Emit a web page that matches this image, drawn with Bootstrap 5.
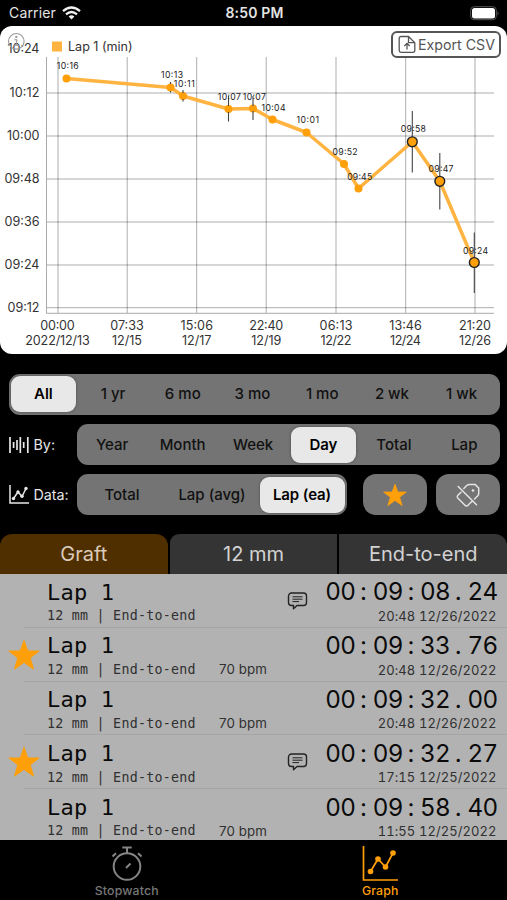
<!DOCTYPE html>
<html lang="en">
<head>
<meta charset="utf-8">
<meta name="viewport" content="width=device-width, initial-scale=1">
<title>Stopwatch Graph</title>
<link rel="stylesheet" href="https://cdn.jsdelivr.net/npm/bootstrap@5.3.0/dist/css/bootstrap.min.css">
<style>
body{background:#000;font-family:Inter,"Liberation Sans",sans-serif;height:900px;overflow:hidden;line-height:1.2}
svg{display:block;flex:none}
.status{height:26px;color:#e4e4e4;font-size:14px;letter-spacing:.15px;padding:1px 7px 0 9px}
.status>*{flex:1 1 0}
.chart-panel{height:328px;background:#fff;border-radius:12px}
.chart-panel text{fill:#333;font-size:12.6px}
.chart-panel .pt text{font-size:8.7px;fill:#222}
.btn-export{top:5px;right:6px;width:110px;height:27px;border:2px solid #555;border-radius:6px;color:#555;font-size:14.200px;background:#fff;padding:0 0 0 4.500px;gap:2.500px;white-space:nowrap}
.controls{padding:19.5px 7.5px 0 8.5px;height:179.5px;font-size:15px;color:#e6e6e6}
.seg{height:41px;background:#747474;border-radius:11px;padding:2.500px 0;color:#111;font-weight:500;grid-auto-flow:column;grid-auto-columns:minmax(0,1fr)}
.seg.range{padding-right:3px}
.seg>span{display:flex;align-items:center;justify-content:center;border-radius:9px;white-space:nowrap}
.seg>.on{background:#e8e8e8;font-weight:600;color:#000;letter-spacing:-.1px;margin:0 2.500px;box-shadow:0 0 3px rgba(0,0,0,.35)}
.seg-label{width:68.5px;gap:5px;font-size:14.3px}
.sq{width:63.5px;height:41px;background:#747474;border-radius:13px}
.tabs3{height:40.5px;gap:2px}
.tabs3>div{flex:1 1 0;background:#343434;color:#d2d2d2;font-size:20px;display:flex;align-items:center;justify-content:center}
.tabs3>div:first-child{background:#4f2f00;border-radius:12px 12px 0 0;color:#dacbbb}
.tabs3>div:nth-child(2){border-radius:9px 0 0 0}
.tabs3>div:last-child{border-radius:0 12px 0 0}
.laps{height:266px;background:#b2b2b2;overflow:hidden;color:#0a0a0a}
.lap{height:53.8px;display:grid;grid-template-columns:47px 172px 68px 25px 1fr;padding-right:10.500px;background:linear-gradient(#a6a6a6,#a6a6a6) 24px 100%/100% 1px no-repeat}
.mono{font-family:"DejaVu Sans Mono","Liberation Mono",monospace}
.lap-name{font-size:22px;line-height:28px;padding-top:4.500px;letter-spacing:.2px}
.lap-sub{font-size:13.3px;line-height:18px;height:18px;letter-spacing:.26px;color:#303030;white-space:nowrap;margin-top:.800px}
.lap-bpm{font-size:13.300px;line-height:18px;padding-top:32.500px;color:#303030;letter-spacing:.1px}
.lap-time{font-size:24.2px;line-height:28px;padding-top:4.400px;justify-content:flex-end}
.lap-time b{font-weight:400;width:29px;text-align:center;letter-spacing:-.7px;font-feature-settings:"tnum"}
.lap-time i{font-style:normal;width:18.4px;text-align:center}
.lap-date{font-size:13px;line-height:18px;text-align:right;letter-spacing:.08px;font-feature-settings:"tnum";color:#303030;margin-top:.400px;white-space:nowrap}
.note-cell{padding-top:18px}
.star-cell{padding:11px 0 0 8px}
.tabbar{height:60px;color:#777;font-size:12.300px;font-weight:500;letter-spacing:.15px}
.tabbar>div{flex:1 1 0;gap:2px}
.orange{color:#ff9f0a}
</style>
<script src="https://cdn.jsdelivr.net/npm/bootstrap@5.3.0/dist/js/bootstrap.bundle.min.js"></script>
</head>
<body>
<svg width="0" height="0" class="position-absolute">
<defs>
<symbol id="star" viewBox="0 0 32 32"><path d="M16 1.5 19.8 12h11.4l-9 6.9 3.3 11.2L16 23.4l-9.500 6.700L9.800 18.900.8 12h11.400Z" fill="#ff9f0a" stroke="#ff9f0a" stroke-linejoin="round"/></symbol>
<symbol id="note" viewBox="0 0 20 18"><path d="M4 1h12a3 3 0 0 1 3 3v6.500a3 3 0 0 1-3 3H9.500L6 16.800V13.500H4a3 3 0 0 1-3-3V4a3 3 0 0 1 3-3Z" fill="none" stroke="#222" stroke-width="1.400" stroke-linejoin="round"/><path d="M5 4.800h10M5 7.200h10M5 9.600h6.500" stroke="#222"/></symbol>
</defs>
</svg>

<header class="status d-flex align-items-center">
  <div class="d-flex align-items-center gap-2"><span>Carrier</span>
    <svg width="19" height="14" viewBox="0 0 19 14" fill="none" stroke="#f0f0f0" stroke-width="2.300" style="margin-left:-2px"><path d="M1 5.200Q9.500-2.200 18 5.200M4 8.300q5.500-4.600 11 0"/><path d="M6.600 10.400q2.900-2.200 5.800 0L9.500 13.600Z" fill="#f0f0f0" stroke="none"/></svg></div>
  <div class="text-center fw-semibold text-nowrap">8:50 PM</div>
  <div class="d-flex justify-content-end"><svg width="30" height="15" viewBox="0 0 30 15"><rect x=".7" y=".7" width="25.600" height="13" rx="3.500" fill="none" stroke="#555"/><rect x="2" y="2" width="23" height="10.400" rx="2.500" fill="#fff"/><path d="M27.500 5v4.500q2.200-2.200 0-4.500" fill="#555"/></svg></div>
</header>

<section class="chart-panel position-relative">
<svg width="507" height="328" viewBox="0 26 507 328">
  <path d="M46 93H494M46 136H494M46 179H494M46 222H494M46 265H494M46 307.700H494M58 57V313M127.200 57V313M196.700 57V313M266.200 57V313M336 57V313M405.700 57V313M475 57V313" stroke="#000" stroke-opacity=".32" fill="none"/>
  <path d="M46.500 57V313.300H494" stroke="#aaa" fill="none"/>
  <g text-anchor="end">
    <text x="39.500" y="53" textLength="32">10:24</text><text x="39.500" y="96.500" textLength="30">10:12</text><text x="39.500" y="139.500" textLength="32.500">10:00</text><text x="39.500" y="182.500" textLength="35">09:48</text><text x="39.500" y="225.500" textLength="35">09:36</text><text x="39.500" y="268.500" textLength="35">09:24</text><text x="39.500" y="311.500" textLength="32">09:12</text>
  </g>
  <g text-anchor="middle">
    <text x="57.500" y="330" textLength="34.500">00:00</text><text x="57.500" y="345" textLength="64.500">2022/12/13</text>
    <text x="127" y="330" textLength="33.500">07:33</text><text x="127" y="345" textLength="30">12/15</text>
    <text x="196.700" y="330" textLength="32.500">15:06</text><text x="196.700" y="345" textLength="29.500">12/17</text>
    <text x="266.300" y="330" textLength="34">22:40</text><text x="266.300" y="345" textLength="30">12/19</text>
    <text x="336" y="330" textLength="33">06:13</text><text x="336" y="345" textLength="31">12/22</text>
    <text x="405.500" y="330" textLength="32.500">13:46</text><text x="405.500" y="345" textLength="31">12/24</text>
    <text x="475" y="330" textLength="32">21:20</text><text x="475" y="345" textLength="32">12/26</text>
  </g>
  <rect x="52" y="41.500" width="10" height="10" fill="#ffb340"/>
  <text x="68" y="51" textLength="64.500">Lap 1 (min)</text>
  <g fill="none" stroke="#999" stroke-width="1.100"><circle cx="16.300" cy="41.300" r="7.800"/><path d="M14.300 39.800H16.700V45M14 45.200h5"/><circle cx="16.300" cy="37" r=".6" fill="#999"/></g>
  <polyline points="66.500,78.500 170.500,87.500 183,96 228.500,109 253,108.500 272.500,119.500 306.500,132.500 344,164 358.500,188.500 412.300,141.800 439.800,181.300 474.300,262.500" fill="none" stroke="#ffb340" stroke-width="3.500" stroke-linejoin="round"/>
  <g fill="#ff9f0a"><circle cx="66.500" cy="78.500" r="4"/><circle cx="170.500" cy="87.500" r="4"/><circle cx="183" cy="96" r="4"/><circle cx="228.500" cy="109" r="4"/><circle cx="253" cy="108.500" r="4"/><circle cx="272.500" cy="119.500" r="4"/><circle cx="306.500" cy="132.500" r="4"/><circle cx="344" cy="164" r="4"/><circle cx="358.500" cy="188.500" r="4"/></g>
  <path d="M170.500 82v2M170.500 91v1.500M183 90v3M183 99v2.500M228.500 96v10M228.500 112v9.500M253 96v10M253 111v9M412.300 111v26M412.300 146v26.500M439.800 153v24M439.800 186v23.500M474.300 232.500v25M474.300 267v26" stroke="#444" stroke-width="1.100"/>
  <g fill="#ff9f0a" stroke="#222" stroke-width="1.400"><circle cx="412.300" cy="141.800" r="4.900"/><circle cx="439.800" cy="181.300" r="4.900"/><circle cx="474.300" cy="262.500" r="4.900"/></g>
  <g class="pt" text-anchor="middle">
    <text x="67.700" y="69.300" textLength="22">10:16</text><text x="172" y="77.700" textLength="22">10:13</text><text x="184.300" y="86.700" textLength="21">10:11</text><text x="229.300" y="99.700" textLength="23">10:07</text><text x="254.300" y="99.700" textLength="23">10:07</text><text x="273.500" y="110.500" textLength="24">10:04</text><text x="307.700" y="123" textLength="22.500">10:01</text><text x="345" y="154.700" textLength="25">09:52</text><text x="359.700" y="179.700" textLength="25">09:45</text><text x="413.300" y="132.300" textLength="25">09:58</text><text x="441" y="172" textLength="25">09:47</text><text x="475.500" y="253.500" textLength="25">09:24</text>
  </g>
</svg>
<div class="btn-export position-absolute d-flex align-items-center">
  <svg width="18" height="19" viewBox="0 0 18 19" fill="none" stroke="#555" stroke-width="1.300"><path d="M10.500 1.500H3A1.800 1.800 0 0 0 1.200 3.300V15.500A1.800 1.800 0 0 0 3 17.300H15A1.800 1.800 0 0 0 16.800 15.500V7.700ZM10.500 1.500V7.700H16.800M9 14.500V8.500M6.300 11 9 8.300l2.700 2.700"/></svg>
  <span>Export CSV</span>
</div>
</section>

<section class="controls">
  <div class="seg range d-grid"><span class="on">All</span><span>1 yr</span><span>6 mo</span><span>3 mo</span><span>1 mo</span><span>2 wk</span><span>1 wk</span></div>
  <div class="d-flex" style="margin-top:9.500px">
    <div class="seg-label d-flex align-items-center">
      <svg width="20" height="16" viewBox="0 0 20 16" stroke="#e8e8e8" stroke-width="1.700"><path d="M1 0v16M4.600 5v6M8 3v10M11.300 0v16M14.700 5v6M18.800 0v16"/></svg><span>By:</span></div>
    <div class="seg d-grid flex-fill"><span>Year</span><span>Month</span><span>Week</span><span class="on">Day</span><span>Total</span><span>Lap</span></div>
  </div>
  <div class="d-flex" style="margin-top:9px">
    <div class="seg-label d-flex align-items-center">
      <svg width="20" height="19" viewBox="0 0 20 19" fill="none" stroke="#e8e8e8" stroke-width="1.500"><path d="M1 0v18h19M4.500 13.500 9 7l4 4.500L17 3.500"/><g fill="#e8e8e8" stroke="none"><circle cx="4.500" cy="13.500" r="1.700"/><circle cx="9" cy="7" r="1.700"/><circle cx="13" cy="11.300" r="1.700"/><circle cx="17" cy="3.500" r="1.700"/></g></svg><span>Data:</span></div>
    <div class="seg d-grid flex-fill"><span>Total</span><span>Lap (avg)</span><span class="on">Lap (ea)</span></div>
    <div class="sq d-flex align-items-center justify-content-center ms-3"><svg width="24" height="24"><use href="#star"/></svg></div>
    <div class="sq d-flex align-items-center justify-content-center" style="margin-left:9.500px">
      <svg width="26" height="26" viewBox="0 0 26 26" fill="none" stroke="#e4e4e4" stroke-width="1.500" stroke-linecap="round" stroke-linejoin="round"><path d="M8.800 6.500 12 3.300Q13 2.400 14.300 2.400H20L23.700 6V11.500Q23.700 12.800 22.800 13.700L19.500 17M17 19.300l-4 4Q11.500 24.500 10 23.300L2.700 16Q1.700 14.800 2.700 13.600L6 10.200M3.200 4.500 21.500 22.700"/><circle cx="18" cy="8.500" r="1.300" fill="#e4e4e4" stroke="none"/></svg></div>
  </div>
</section>

<div class="tabs3 d-flex"><div>Graft</div><div>12 mm</div><div>End-to-end</div></div>

<main class="laps">
  <div class="lap"><div></div><div class="mono"><div class="lap-name">Lap 1</div><div class="lap-sub">12 mm | End-to-end</div></div><div class="lap-bpm"></div><div class="note-cell"><svg width="21" height="18"><use href="#note"/></svg></div><div><div class="lap-time d-flex"><b>00</b><i>:</i><b>09</b><i>:</i><b>08</b><i>.</i><b>24</b></div><div class="lap-date">20:48 12/26/2022</div></div></div>
  <div class="lap"><div class="star-cell"><svg width="32" height="32"><use href="#star"/></svg></div><div class="mono"><div class="lap-name">Lap 1</div><div class="lap-sub">12 mm | End-to-end</div></div><div class="lap-bpm">70 bpm</div><div></div><div><div class="lap-time d-flex"><b>00</b><i>:</i><b>09</b><i>:</i><b>33</b><i>.</i><b>76</b></div><div class="lap-date">20:48 12/26/2022</div></div></div>
  <div class="lap"><div></div><div class="mono"><div class="lap-name">Lap 1</div><div class="lap-sub">12 mm | End-to-end</div></div><div class="lap-bpm">70 bpm</div><div></div><div><div class="lap-time d-flex"><b>00</b><i>:</i><b>09</b><i>:</i><b>32</b><i>.</i><b>00</b></div><div class="lap-date">20:48 12/26/2022</div></div></div>
  <div class="lap"><div class="star-cell"><svg width="32" height="32"><use href="#star"/></svg></div><div class="mono"><div class="lap-name">Lap 1</div><div class="lap-sub">12 mm | End-to-end</div></div><div class="lap-bpm"></div><div class="note-cell"><svg width="21" height="18"><use href="#note"/></svg></div><div><div class="lap-time d-flex"><b>00</b><i>:</i><b>09</b><i>:</i><b>32</b><i>.</i><b>27</b></div><div class="lap-date">17:15 12/25/2022</div></div></div>
  <div class="lap"><div></div><div class="mono"><div class="lap-name">Lap 1</div><div class="lap-sub">12 mm | End-to-end</div></div><div class="lap-bpm">70 bpm</div><div></div><div><div class="lap-time d-flex"><b>00</b><i>:</i><b>09</b><i>:</i><b>58</b><i>.</i><b>40</b></div><div class="lap-date">11:55 12/25/2022</div></div></div>
</main>

<nav class="tabbar d-flex text-center">
  <div class="d-flex flex-column align-items-center pt-1">
    <svg width="34" height="38" viewBox="0 0 34 38" fill="none" stroke="#858585" stroke-width="2"><circle cx="17" cy="22.500" r="13.300"/><path d="M17 9V4.500M12.300 3.600h9.400M16 24l4.500-4.500M2.500 12.500l3.500-3.300M31.500 12.500 28 9.200"/></svg>
    <span>Stopwatch</span></div>
  <div class="d-flex flex-column align-items-center pt-1 orange">
    <svg width="36" height="38" viewBox="0 0 36 38" fill="none" stroke="#ff9f0a" stroke-width="1.700"><path d="M1.500 2v34H36M8.500 27.500 16 15l7.500 8L31 9"/><g fill="#ff9f0a" stroke="none"><circle cx="8.500" cy="27.500" r="2.800"/><circle cx="16" cy="15" r="2.800"/><circle cx="23.500" cy="23" r="2.800"/><circle cx="31" cy="9" r="2.800"/></g></svg>
    <span>Graph</span></div>
</nav>
</body>
</html>
